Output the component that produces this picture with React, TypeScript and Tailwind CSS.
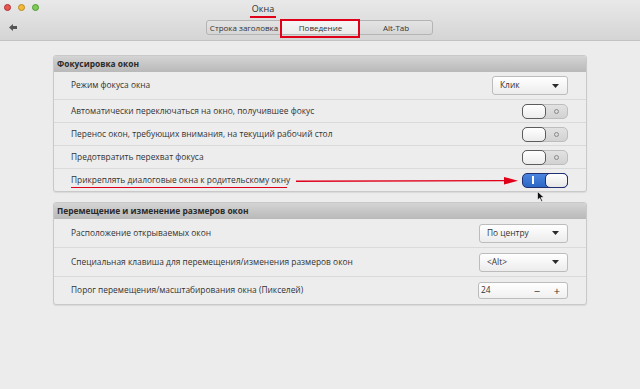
import React from "react";

function Toggle({ on = false }: { on?: boolean }) {
  if (on) {
    return (
      <div className="relative flex h-[15px] w-[46px] items-center rounded-[5px] border border-[#1f2f72] bg-gradient-to-b from-[#4a86df] to-[#2c66c6]">
        <span className="ml-[9px] h-[8px] w-[2px] bg-white" />
        <span className="absolute right-[-1px] top-[-1px] h-[15px] w-[23px] rounded-[5px] border border-[#1f2f72] bg-gradient-to-b from-white to-[#e6e6e6]" />
      </div>
    );
  }
  return (
    <div className="relative flex h-[15px] w-[46px] items-center justify-end rounded-[5px] border border-[#bdbdbd] bg-gradient-to-b from-[#e2e2e2] to-[#d2d2d2]">
      <span className="mr-[8px] h-[5px] w-[5px] rounded-full border border-[#8a8a8a]" />
      <span className="absolute left-[-1px] top-[-1px] h-[15px] w-[24px] rounded-[5px] border border-[#5c5c5c] bg-gradient-to-b from-white to-[#ececec]" />
    </div>
  );
}

function Select({ value, w }: { value: string; w: string }) {
  return (
    <div
      className={`flex h-[19px] ${w} items-center justify-between rounded-[3px] border border-[#bcbcbc] bg-gradient-to-b from-white to-[#ececec] pl-[7px] pr-[8px] text-[8.4px] text-[#333]`}
    >
      <span>{value}</span>
      <svg width="7" height="4" viewBox="0 0 7 4">
        <path d="M0 0h7L3.5 4z" fill="#2b2b2b" />
      </svg>
    </div>
  );
}

function Row({ label, h, last, children }: { label: React.ReactNode; h: string; last?: boolean; children: React.ReactNode }) {
  return (
    <div className={`flex ${h} items-center justify-between pl-[17px] pr-[18px] ${last ? "" : "border-b border-[#dadada]"}`}>
      <span className="text-[8.4px] text-[#333]">{label}</span>
      {children}
    </div>
  );
}

function Panel({ title, children }: { title: string; children: React.ReactNode }) {
  return (
    <section className="w-[534px] overflow-hidden rounded-[3px] border border-[#c9c9c9] bg-[#ededed] shadow-[0_1px_1px_rgba(0,0,0,0.08)]">
      <div className="flex h-[16px] items-center bg-gradient-to-b from-[#d4d4d4] to-[#b9b9b9] pl-[3px] text-[8.4px] font-bold text-[#2a2a2a]">
        {title}
      </div>
      {children}
    </section>
  );
}

export default function App() {
  return (
    <div className="relative h-[389px] w-[640px] overflow-hidden bg-[#ececec]" style={{ fontFamily: '"Open Sans", "Noto Sans", sans-serif' }}>
      <header className="relative h-[41px] border-b border-[#c2c2c2] bg-gradient-to-b from-[#e9e9e9] to-[#d5d5d5]">
        <div className="flex items-center gap-[7px] pl-[4px] pt-[4px]">
          <span className="h-[7px] w-[7px] rounded-full border border-[#b03030] bg-[#e85555]" />
          <span className="h-[7px] w-[7px] rounded-full border border-[#b88a20] bg-[#f2b93a]" />
          <span className="h-[7px] w-[7px] rounded-full border border-[#4f9a35] bg-[#7fcb55]" />
        </div>
        <div className="absolute left-[250px] top-[2px] w-[26px] text-center text-[9px] text-[#2e2e2e]">
          Окна
          <span className="absolute bottom-[-2px] left-0 h-[2px] w-[26px] bg-[#e0001a]" />
        </div>
        <svg className="absolute left-[9px] top-[24px]" width="8" height="7" viewBox="0 0 8 7">
          <path d="M0 3.5L4 0v2h4v3H4v2z" fill="#555" />
        </svg>
        <div className="absolute left-[206px] top-[20px] flex h-[15px] w-[227px] rounded-[3px] border border-[#b4b4b4] bg-gradient-to-b from-[#e4e4e4] to-[#d6d6d6] text-[8px] text-[#333]">
          <div className="flex w-[75px] items-center justify-center border-r border-[#b4b4b4]">Строка заголовка</div>
          <div className="flex w-[77px] items-center justify-center bg-gradient-to-b from-[#f5f5f5] to-[#ebebeb]">Поведение</div>
          <div className="flex flex-1 items-center justify-center border-l border-[#b4b4b4]">Alt-Tab</div>
        </div>
        <div className="absolute left-[280px] top-[19px] h-[19px] w-[80px] border-2 border-[#e0001a]" />
      </header>

      <main className="flex flex-col gap-[10px] pl-[53px] pt-[14px]">
        <Panel title="Фокусировка окон">
          <Row label="Режим фокуса окна" h="h-[28px]">
            <Select value="Клик" w="w-[76px]" />
          </Row>
          <Row label="Автоматически переключаться на окно, получившее фокус" h="h-[23px]">
            <Toggle />
          </Row>
          <Row label="Перенос окон, требующих внимания, на текущий рабочий стол" h="h-[23px]">
            <Toggle />
          </Row>
          <Row label="Предотвратить перехват фокуса" h="h-[23px]">
            <Toggle />
          </Row>
          <Row
            label={
              <span className="relative">
                Прикреплять диалоговые окна к родительскому окну
                <span className="absolute bottom-[-3px] left-0 h-[1px] w-[216px] bg-[#e0001a]" />
              </span>
            }
            h="h-[22px]"
            last
          >
            <Toggle on />
          </Row>
        </Panel>

        <Panel title="Перемещение и изменение размеров окон">
          <Row label="Расположение открываемых окон" h="h-[29px]">
            <Select value="По центру" w="w-[89px]" />
          </Row>
          <Row label="Специальная клавиша для перемещения/изменения размеров окон" h="h-[29px]">
            <Select value="<Alt>" w="w-[89px]" />
          </Row>
          <Row label="Порог перемещения/масштабирования окна (Пикселей)" h="h-[27px]" last>
            <div className="flex h-[17px] w-[90px] items-center rounded-[3px] border border-[#bcbcbc] bg-gradient-to-b from-white to-[#f0f0f0] pl-[2px] text-[8.4px] text-[#333]">
              <span className="flex-1">24</span>
              <span className="w-[20px] text-center text-[11px] leading-none">−</span>
              <span className="w-[20px] text-center text-[11px] leading-none">+</span>
            </div>
          </Row>
        </Panel>
      </main>

      <svg className="absolute left-[296px] top-[177px]" width="224" height="8" viewBox="0 0 224 8">
        <path d="M0 4.2L210 3.6" stroke="#e0001a" strokeWidth="1.4" />
        <path d="M208 0L222 3.7L208 7.6z" fill="#e0001a" />
      </svg>
      <svg className="absolute left-[537px] top-[191px]" width="8" height="11" viewBox="0 0 8 11">
        <path d="M0.5 0.5V9l2.2-2 1.6 3.5 1.3-.6L4 6.5h3z" fill="#111" stroke="#fff" strokeWidth="0.6" />
      </svg>
    </div>
  );
}
